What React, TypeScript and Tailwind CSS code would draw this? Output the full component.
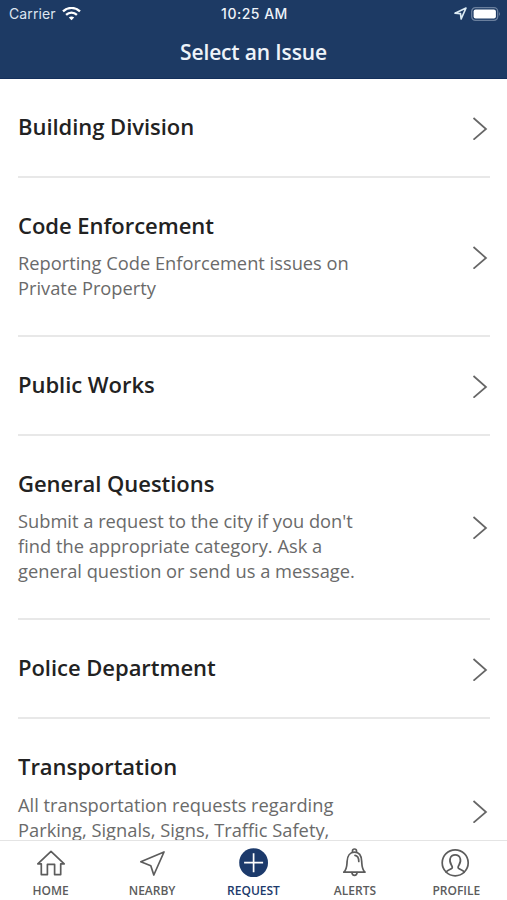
import type { ReactNode } from "react";

type Issue = { title: string; lines?: string[]; height: string; gap?: string };

const issues: Issue[] = [
  { title: "Building Division", height: "h-[99px]" },
  {
    title: "Code Enforcement",
    lines: ["Reporting Code Enforcement issues on", "Private Property"],
    height: "h-[159px]",
    gap: "mt-[10px]",
  },
  { title: "Public Works", height: "h-[99px]" },
  {
    title: "General Questions",
    lines: [
      "Submit a request to the city if you don't",
      "find the appropriate category. Ask a",
      "general question or send us a message.",
    ],
    height: "h-[184px]",
    gap: "mt-[10px]",
  },
  { title: "Police Department", height: "h-[99px]" },
  {
    title: "Transportation",
    lines: [
      "All transportation requests regarding",
      "Parking, Signals, Signs, Traffic Safety,",
    ],
    height: "h-[185px]",
    gap: "mt-[11px]",
  },
];

function Chevron() {
  return (
    <svg width="16" height="24" viewBox="0 0 16 24" fill="none" stroke="#666" strokeWidth="1.7" className="shrink-0">
      <path d="M1.5 2 14 13 1.5 23.7" />
    </svg>
  );
}

function IssueRow({ issue }: { issue: Issue }) {
  return (
    <li className={"flex shrink-0 items-center justify-between border-b-2 border-[#e8e8e8] pr-[2px] " + issue.height}>
      <div className="self-start pt-[32px]">
        <h2 className="text-[22px] leading-[30px] font-semibold tracking-[-0.04px] text-[#222]">{issue.title}</h2>
        {issue.lines && (
          <p className={"text-[18.3px] leading-[25px] text-[#6a6a6a] " + issue.gap}>
            {issue.lines.map((line) => (
              <span key={line} className="block whitespace-nowrap">{line}</span>
            ))}
          </p>
        )}
      </div>
      <Chevron />
    </li>
  );
}

function Tab({ label, active, children }: { label: string; active?: boolean; children: ReactNode }) {
  return (
    <a className={"flex flex-1 flex-col items-center pt-[7px] " + (active ? "text-[#1c3a6b]" : "text-[#5c5c5c]")}>
      <svg width="30" height="31" viewBox="0 -1 30 31" fill="none" stroke="currentColor" strokeWidth="1.7" strokeLinejoin="round" strokeLinecap="round">
        {children}
      </svg>
      <span className="mt-[4px] text-[12px] leading-[16px] font-semibold">{label}</span>
    </a>
  );
}

export default function App() {
  return (
    <div className="flex h-[900px] w-[507px] flex-col overflow-hidden bg-white font-['Open_Sans',sans-serif]">
      <header className="h-[79px] shrink-0 border-b border-[#142f5b] bg-[#1d3a64] text-white">
        <div className="grid h-[27px] grid-cols-3 items-center pr-[7px] pl-[9px] font-['Inter',sans-serif]">
          <div className="flex items-center gap-[6px] text-[#dde5f0]">
            <span className="text-[14px] leading-[20px] tracking-[0.1px]">Carrier</span>
            <svg width="19" height="14" viewBox="0 0 19 14" fill="none" stroke="white" strokeWidth="2.3">
              <path d="M1 4.4C5.8-.2 13.2-.2 18 4.4" />
              <path d="M4.1 7.8c3.1-3 7.7-3 10.8 0" />
              <path d="M6.8 10.5c1.5-1.5 3.9-1.5 5.4 0L9.5 13.3Z" fill="white" stroke="none" />
            </svg>
          </div>
          <span className="text-center text-[14px] leading-[20px] font-medium tracking-[0.5px] text-[#eef3f9]">10:25 AM</span>
          <div className="flex items-center justify-end gap-[4px]">
            <svg width="13" height="13" viewBox="0 0 12 12" fill="none" stroke="#dcebf4" strokeWidth="1.5" strokeLinejoin="round">
              <path d="M.9 5.7 11.1.9 6.6 11 6 6.1Z" />
            </svg>
            <svg width="30" height="14" viewBox="0 0 30 14" className="-mr-px">
              <rect x=".7" y=".7" width="26" height="12.6" rx="3.7" fill="none" stroke="#6a7f9d" strokeWidth="1.3" />
              <rect x="2.6" y="2.5" width="22.3" height="9" rx="2" fill="white" />
              <path d="M28 4.7q1.8 2.3 0 4.6Z" fill="#7a8da8" />
            </svg>
          </div>
        </div>
        <h1 className="pt-[10px] text-center text-[21px] leading-[30px] font-semibold tracking-[-0.15px] text-[#eef3f9]">Select an Issue</h1>
      </header>
      <main className="min-h-0 flex-1 overflow-hidden">
        <ul className="flex flex-col pr-[17px] pl-[18px]">
          {issues.map((issue) => <IssueRow key={issue.title} issue={issue} />)}
        </ul>
      </main>
      <nav className="flex h-[60px] shrink-0 border-t border-[#e4e4e4] bg-white">
        <Tab label="HOME">
          <path d="M1.8 14.8 15 2.3 28.2 14.8H24.7V25.6H18.6V15.4H11.4V25.6H5.3V14.8Z" />
        </Tab>
        <Tab label="NEARBY">
          <path d="M3.8 12.7 27 3 16.8 26 13.8 16.8Z" />
        </Tab>
        <Tab label="REQUEST" active>
          <circle cx="14.6" cy="13.7" r="14.4" fill="currentColor" stroke="none" />
          <path d="M5.1 13.7h19M14.6 4.2v19" stroke="white" strokeLinecap="butt" />
        </Tab>
        <Tab label="ALERTS">
          <path d="M12.5 3.2V2a2 2 0 0 1 4 0v1.2" />
          <path d="M3.8 23.2c3.2-3 3-5.9 3.3-10.7C7.3 7 10 3.2 14.5 3.2s7 3.8 7.2 9.3c.3 4.8.1 7.7 3.3 10.7Z" />
          <path d="M11.9 23.5c.3 3.8 4.9 3.8 5.2 0M15 6.3c2.8.4 3.8 3 3.8 6.2" />
        </Tab>
        <Tab label="PROFILE">
          <circle cx="14.2" cy="13.8" r="13" />
          <path d="M5.2 23.3c1-2.5 3.7-2.2 5.6-3.9.8-.8.5-2-.3-3.2-1.4-2.2-2-5-1.2-7.2.7-2.2 2.5-3.2 4.9-3.2s4.2 1 4.9 3.2c.8 2.2.2 5-1.2 7.2-.8 1.2-1.1 2.4-.3 3.2 1.9 1.7 4.6 1.4 5.6 3.9" />
        </Tab>
      </nav>
    </div>
  );
}
